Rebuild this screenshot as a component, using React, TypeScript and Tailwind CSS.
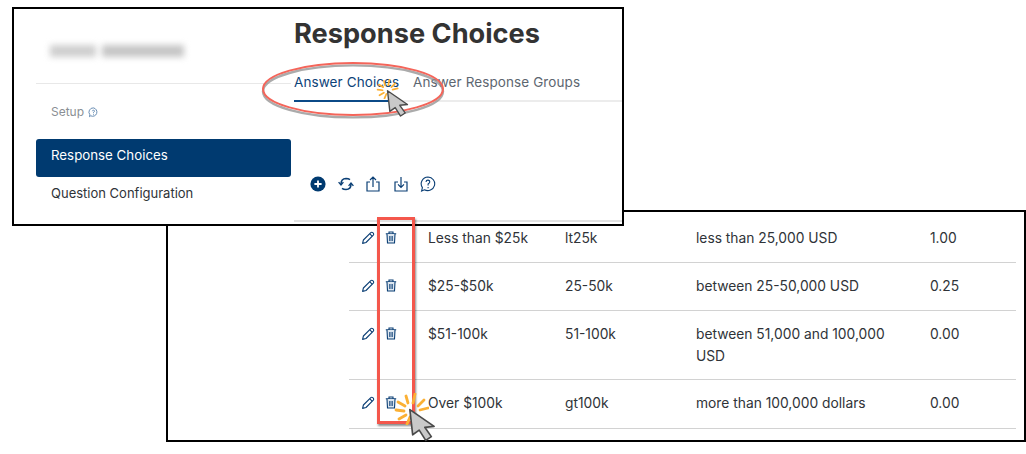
import React from "react";

const navy = "#0b3f75";

function Cursor({ className }: { className: string }) {
  return (
    <svg viewBox="0 0 30 36" className={className}>
      <path d="M2 2 L28 20 L18 21 L25 31 L19 35 L12 24 L5 29 Z" fill="#c9c9c9" stroke="#4a4a4a" strokeWidth="1.8" strokeLinejoin="round" />
    </svg>
  );
}

function Spark({ className }: { className: string }) {
  const rays = [
    [3, 17, 11, 18], [5, 9, 12, 13], [13, 3, 15, 10], [22, 1, 20, 10], [31, 7, 25, 13], [35, 15, 27, 17], [6, 26, 13, 22], [14, 31, 17, 24],
  ];
  return (
    <svg viewBox="0 0 36 32" className={className}>
      {rays.map((r, i) => (
        <line key={i} x1={r[0]} y1={r[1]} x2={r[2]} y2={r[3]} stroke="#fbb034" strokeWidth="2.8" strokeLinecap="round" />
      ))}
    </svg>
  );
}

function Pencil() {
  return (
    <svg viewBox="0 0 14 14" className="h-[14px] w-[14px]" fill="none" stroke={navy} strokeWidth="1.1" strokeLinejoin="round">
      <path d="M1.6 12.4 L2.4 9 L9.8 1.6 Q10.8 .8 11.8 1.7 L12.4 2.3 Q13.1 3.2 12.3 4.1 L5 11.5 Z" />
      <path d="M8.8 2.8 L11.2 5.2" />
    </svg>
  );
}

function Trash() {
  return (
    <svg viewBox="0 0 12 13" className="h-[13px] w-[12px]" fill="none" stroke={navy} strokeWidth="1.1">
      <path d="M.8 2.8 H11.2 M4 2.6 V1 H8 V2.6" />
      <path d="M2 3 L2.5 12 H9.5 L10 3" fill="#dde6ef" />
      <path d="M4.6 5 V10 M6 5 V10 M7.4 5 V10" strokeWidth=".8" />
    </svg>
  );
}

const rows = [
  ["Less than $25k", "lt25k", "less than 25,000 USD", "1.00", "h-[51px] pt-[15px]"],
  ["$25-$50k", "25-50k", "between 25-50,000 USD", "0.25", "h-[48px] pt-[12px]"],
  ["$51-100k", "51-100k", "between 51,000 and 100,000 USD", "0.00", "h-[69px] pt-[12px]"],
  ["Over $100k", "gt100k", "more than 100,000 dollars", "0.00", "h-[49px] pt-[12px]"],
];

export default function App() {
  return (
    <div className="relative h-[454px] w-[1026px] overflow-hidden bg-white font-['Inter',sans-serif] text-[#2f3338]">
      {/* lower screenshot */}
      <div className="absolute left-[166px] top-[210px] h-[232px] w-[860px] border-2 border-black bg-white pl-[181px] pr-[8px]">
        {rows.map((r, i) => (
          <div key={i} className={`grid grid-cols-[37px_42px_137px_131px_234px_86px] border-b border-[#d2d2d2] text-[13.8px] leading-[22px] ${r[4]}`}>
            <div className="pl-[12px] pt-[4px]"><Pencil /></div>
            <div className="-ml-[1px] pt-[4px]"><Trash /></div>
            <div>{r[0]}</div>
            <div>{r[1]}</div>
            <div className="pr-[30px]">{r[2]}</div>
            <div>{r[3]}</div>
          </div>
        ))}
      </div>

      {/* upper screenshot */}
      <div className="absolute left-[12px] top-[7px] flex h-[219px] w-[612px] border-2 border-black bg-white">
        <aside className="ml-[22px] w-[255px]">
          <div className="flex h-[75px] items-center border-b border-[#e8e8e8] pl-[14px] pt-[9px]">
            <div className="flex h-[12px] w-[134px] gap-[6px] blur-[3px]">
              <div className="w-[46px] bg-[#cfcfcf]" />
              <div className="flex-1 bg-[#c6c6c6]" />
            </div>
          </div>
          <div className="mt-[20px] flex items-center gap-[4px] pl-[15px] text-[12px] leading-[16px] text-[#8a8f94]">
            Setup
            <svg viewBox="0 0 12 12" className="h-[11px] w-[11px]" fill="none" stroke="#5c83ad" strokeWidth="1">
              <path d="M6 1 A4.6 4.6 0 1 1 3 9.6 L1.6 10.6 L2 8.4 A4.6 4.6 0 0 1 6 1 Z" />
              <path d="M4.8 4.6 Q5 3.4 6.1 3.5 Q7.3 3.7 7 4.8 Q6.7 5.4 6 5.9 V6.8 M6 8 V8.8" />
            </svg>
          </div>
          <div className="mt-[19px] flex h-[38px] items-center rounded-[3px] bg-[#003a70] pb-[4px] pl-[15px] text-[13.3px] text-white">Response Choices</div>
          <div className="pl-[15px] pt-[6px] text-[13px] leading-[20px]">Question Configuration</div>
        </aside>
        <main className="ml-[3px] min-w-0 flex-1">
          <h1 className="text-[27.2px] font-bold leading-[50px] text-[#333333]">Response Choices</h1>
          <div className="flex h-[43px] gap-[15px] whitespace-nowrap border-b-2 border-[#ececec] text-[13.5px] tracking-[0.1px]">
            <div className="-mb-[2px] h-[43px] w-[104px] border-b-2 border-[#0b4a87] pt-[13px] text-[#0d4379]">Answer Choices</div>
            <div className="pt-[13px] text-[#5d6670]">Answer Response Groups</div>
          </div>
          <div className="mt-[74px] flex items-center gap-[11.5px] pl-[16px]">
            <svg viewBox="0 0 16 16" className="h-[16px] w-[16px]"><circle cx="8" cy="8" r="7.6" fill="#003a70" /><path d="M8 4.4 V11.6 M4.4 8 H11.6" stroke="#fff" strokeWidth="1.8" /></svg>
            <svg viewBox="0 0 16 16" className="h-[16px] w-[16px]" fill="none" stroke={navy} strokeWidth="1.5">
              <path d="M3 8 Q3 2.6 8 2.4 Q10.4 2.4 12 3.6 M13 8 Q13 13.4 8 13.6 Q5.6 13.6 4 12.4" />
              <path d="M.6 6.2 L3 9 L5.4 6.2 M10.6 9.8 L13 7 L15.4 9.8" strokeWidth="1.3" />
            </svg>
            <svg viewBox="0 0 16 16" className="h-[16px] w-[16px]" fill="none" stroke={navy} strokeWidth="1.2">
              <path d="M5 6 H2 V15 H14 V6 H11 M8 11 V1.4 M5 4 L8 1 L11 4" />
            </svg>
            <svg viewBox="0 0 16 16" className="h-[16px] w-[16px]" fill="none" stroke={navy} strokeWidth="1.2">
              <path d="M5 6 H2 V15 H14 V6 H11 M8 1 V11 M5 8.4 L8 11.4 L11 8.4" />
            </svg>
            <svg viewBox="0 0 16 16" className="h-[16px] w-[16px]" fill="none" stroke={navy} strokeWidth="1.1">
              <path d="M8 1 A7 6.8 0 1 1 4.4 13.8 L1.6 15 L2.4 11.6 A7 6.8 0 0 1 8 1 Z" />
              <path d="M6 6 Q6.2 4 8.1 4.1 Q10 4.4 9.8 6 Q9.6 7 8.1 8 V9.6 M8.1 11 V12.2" />
            </svg>
          </div>
          <div className="mt-[28px] border-t-2 border-[#e2e2e2]" />
        </main>
      </div>

      {/* callouts */}
      <svg viewBox="0 0 184 56" className="absolute left-[261px] top-[61px] h-[56px] w-[184px] overflow-visible" fill="none">
        <ellipse cx="92" cy="29" rx="90" ry="26" stroke="#8f8f8f" strokeWidth="2.4" transform="translate(0 1.4)" opacity=".75" />
        <ellipse cx="92" cy="28" rx="90" ry="26" stroke="#f4655a" strokeWidth="2" />
      </svg>
      <Spark className="absolute left-[375px] top-[79px] h-[20px] w-[24px]" />
      <Cursor className="absolute left-[386px] top-[89px] h-[28px] w-[23px]" />

      <div className="absolute left-[377px] top-[217px] h-[207px] w-[38px] border-[3px] border-[#f4574c] shadow-[1px_2px_2px_rgba(0,0,0,0.45)]" />
      <Spark className="absolute left-[393px] top-[393px] h-[32px] w-[36px]" />
      <Cursor className="absolute left-[408px] top-[407px] h-[35px] w-[28px]" />
    </div>
  );
}
